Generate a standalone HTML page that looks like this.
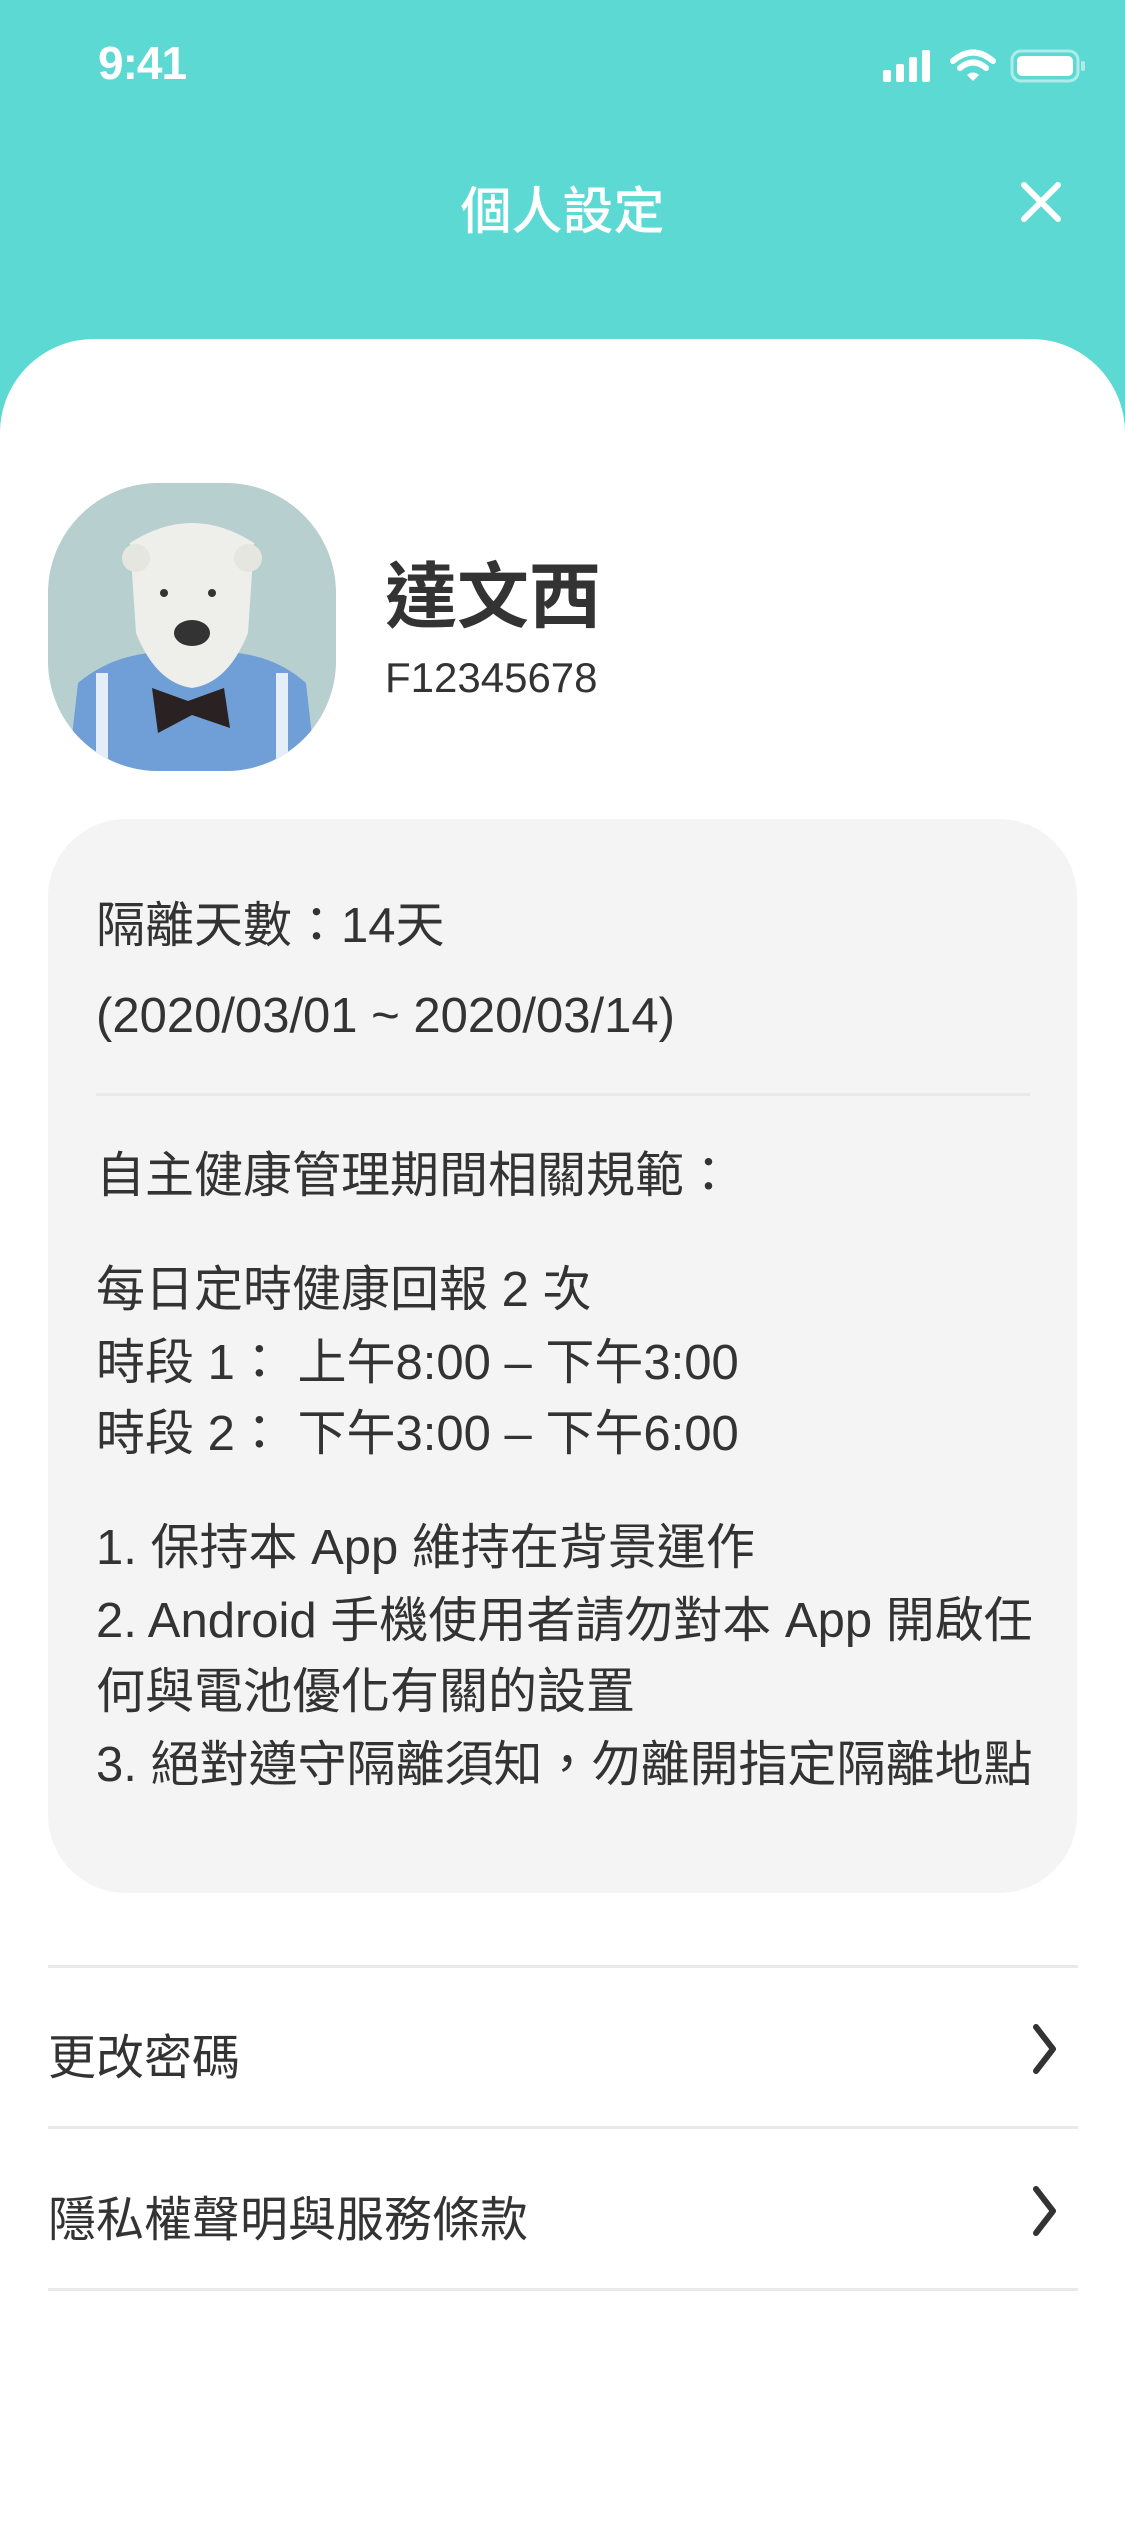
<!DOCTYPE html>
<html><head><meta charset="utf-8">
<style>
*{margin:0;padding:0;box-sizing:border-box}
body{width:1125px;height:2436px;background:#5dd9d4;position:relative;overflow:hidden;font-family:"Liberation Sans","Noto Sans CJK TC",sans-serif;color:#333}
.abs{position:absolute}
.time{left:98px;top:36px;font-size:46px;color:#fff;font-weight:600;letter-spacing:-1px}
.title{left:0;width:1125px;text-align:center;top:170px;font-size:51px;color:#fff;font-weight:500}
.sheet{left:0;top:339px;width:1125px;height:2200px;background:#fff;border-radius:94px 94px 0 0}
.name{left:385px;top:538px;font-size:72px;font-weight:700;color:#333}
.id{left:385px;top:654px;font-size:42px;color:#333}
.card{left:48px;top:819px;width:1029px;height:1074px;background:#f4f4f4;border-radius:78px}
.t{position:absolute;left:96px;font-size:49px;color:#333;white-space:nowrap;line-height:72px}
.div{position:absolute;height:3px;background:#e9e9e9}
.row{position:absolute;left:48px;font-size:48px;color:#333}
</style></head><body>
<div class="abs time">9:41</div>
<svg class="abs" style="left:880px;top:48px" width="210" height="36" viewBox="0 0 210 36">
<rect x="3" y="22" width="8" height="12" rx="2" fill="#fff"/>
<rect x="16" y="16" width="8" height="18" rx="2" fill="#fff"/>
<rect x="29" y="9" width="8" height="25" rx="2" fill="#fff"/>
<rect x="42" y="2" width="8" height="32" rx="2" fill="#fff"/>
<path d="M73 13 Q93 -4 113 13" stroke="#fff" stroke-width="6" fill="none" stroke-linecap="round"/>
<path d="M80 20 Q93 9 106 20" stroke="#fff" stroke-width="6" fill="none" stroke-linecap="round"/>
<path d="M87 27 L93 33 L99 27 Q93 22 87 27Z" fill="#fff"/>
<rect x="132" y="3" width="66" height="30" rx="9" fill="none" stroke="#fff" stroke-opacity=".5" stroke-width="3"/>
<rect x="137" y="8" width="56" height="20" rx="5" fill="#fff"/>
<rect x="201" y="13" width="4" height="10" rx="2" fill="#fff" fill-opacity=".5"/>
</svg>
<div class="abs title">個人設定</div>
<svg class="abs" style="left:1020px;top:181px" width="42" height="42" viewBox="0 0 42 42"><path d="M4 4L38 38M38 4L4 38" stroke="#fff" stroke-width="6" stroke-linecap="round"/></svg>
<div class="abs sheet"></div>
<svg class="abs" style="left:48px;top:483px" width="288" height="288" viewBox="0 0 288 288">
<defs><clipPath id="c"><rect width="288" height="288" rx="110"/></clipPath></defs>
<g clip-path="url(#c)">
<rect width="288" height="288" fill="#b8cfcf"/>
<path d="M20 288 L30 200 Q60 175 100 170 L190 170 Q230 175 258 200 L268 288Z" fill="#6f9fd6"/>
<rect x="48" y="190" width="12" height="98" fill="#e4eef8"/>
<rect x="228" y="190" width="12" height="98" fill="#e4eef8"/>
<path d="M82 60 Q144 20 206 60 L200 150 Q180 200 144 205 Q108 200 88 150Z" fill="#eeeeea"/>
<circle cx="88" cy="75" r="14" fill="#e6e6e0"/><circle cx="200" cy="75" r="14" fill="#e6e6e0"/>
<circle cx="116" cy="110" r="4" fill="#333"/><circle cx="164" cy="110" r="4" fill="#333"/>
<ellipse cx="144" cy="150" rx="18" ry="13" fill="#333"/>
<path d="M104 205 L140 218 L176 205 L182 245 L144 232 L110 250Z" fill="#2a2222"/>
</g></svg>
<div class="abs name">達文西</div>
<div class="abs id">F12345678</div>
<div class="abs card"></div>
<div class="t" style="top:890px">隔離天數：14天</div>
<div class="t" style="top:980px">(2020/03/01 ~ 2020/03/14)</div>
<div class="div" style="left:96px;width:934px;top:1093px"></div>
<div class="t" style="top:1140px">自主健康管理期間相關規範：</div>
<div class="t" style="top:1254px">每日定時健康回報 2 次</div>
<div class="t" style="top:1327px">時段 1：&nbsp;上午8:00 – 下午3:00</div>
<div class="t" style="top:1398px">時段 2：&nbsp;下午3:00 – 下午6:00</div>
<div class="t" style="top:1512px">1. 保持本 App 維持在背景運作</div>
<div class="t" style="top:1585px">2. Android 手機使用者請勿對本 App 開啟任</div>
<div class="t" style="top:1656px">何與電池優化有關的設置</div>
<div class="t" style="top:1729px">3. 絕對遵守隔離須知，勿離開指定隔離地點</div>
<div class="div" style="left:48px;width:1030px;top:1965px"></div>
<div class="row" style="top:2018px">更改密碼</div>
<svg class="abs" style="left:1030px;top:2022px" width="30" height="54" viewBox="0 0 30 54"><path d="M6 5L23 27L6 49" stroke="#333" stroke-width="6" fill="none" stroke-linecap="round" stroke-linejoin="round"/></svg>
<div class="div" style="left:48px;width:1030px;top:2126px"></div>
<div class="row" style="top:2180px">隱私權聲明與服務條款</div>
<svg class="abs" style="left:1030px;top:2184px" width="30" height="54" viewBox="0 0 30 54"><path d="M6 5L23 27L6 49" stroke="#333" stroke-width="6" fill="none" stroke-linecap="round" stroke-linejoin="round"/></svg>
<div class="div" style="left:48px;width:1030px;top:2288px"></div>
</body></html>
